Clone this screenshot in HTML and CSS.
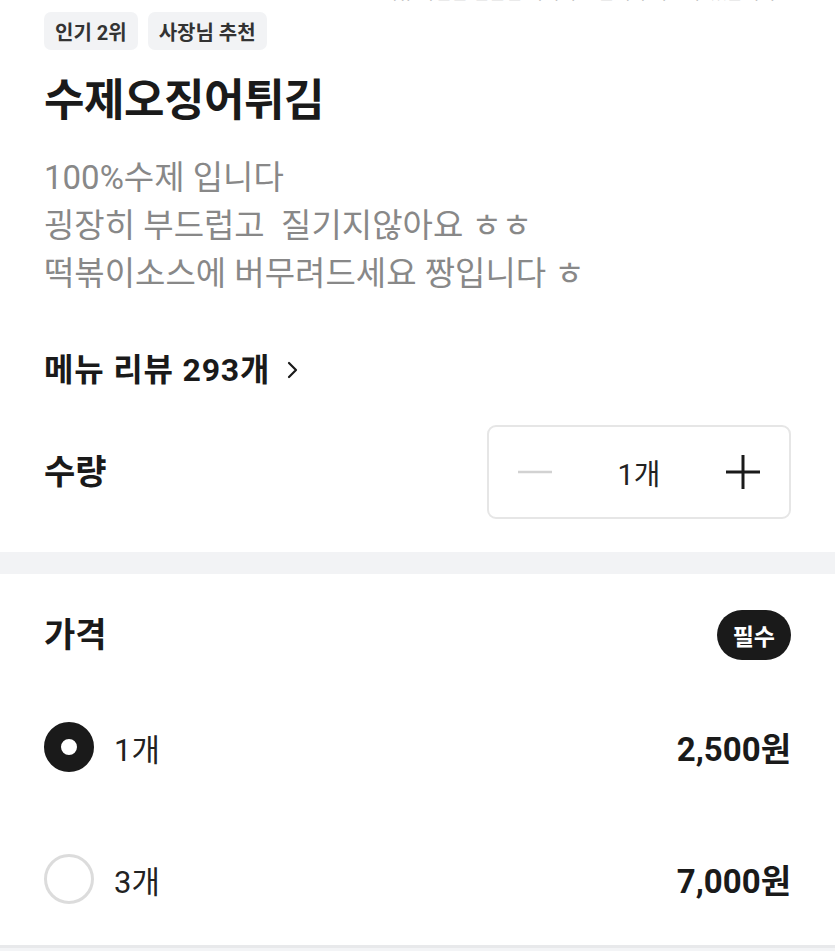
FILE: index.html
```html
<!DOCTYPE html>
<html>
<head>
  <title>수제오징어튀김</title>
  <link rel="stylesheet" href="styles.css">
</head>
<body>
  <div class="notice">
    <p>메뉴 사진은 연출된 이미지로 실제와 다를 수 있습니다.</p>
  </div>

  <section class="menu-info">
    <div class="tags">
      <span class="tag">인기 2위</span>
      <span class="tag">사장님 추천</span>
    </div>
    <h1 class="menu-title">수제오징어튀김</h1>
    <p class="menu-desc">100%수제 입니다<br>굉장히 부드럽고&nbsp; 질기지않아요 ㅎㅎ<br>떡볶이소스에 버무려드세요 짱입니다 ㅎ</p>

    <a class="review-link" href="#">
      메뉴 리뷰 293개
      <svg class="chevron" width="12" height="20" viewBox="0 0 12 20">
        <polyline points="2,3 9,10 2,17" fill="none" stroke="#1a1a1a" stroke-width="2.2" stroke-linecap="round" stroke-linejoin="round"/>
      </svg>
    </a>

    <div class="qty-row">
      <h2 class="row-title">수량</h2>
      <div class="stepper">
        <button class="step-btn" aria-label="빼기">
          <svg width="34" height="34" viewBox="0 0 34 34">
            <line x1="0" y1="17" x2="34" y2="17" stroke="#d2d2d2" stroke-width="2.6"/>
          </svg>
        </button>
        <span class="qty-value">1개</span>
        <button class="step-btn" aria-label="더하기">
          <svg width="34" height="34" viewBox="0 0 34 34">
            <line x1="0" y1="17" x2="34" y2="17" stroke="#1a1a1a" stroke-width="3"/>
            <line x1="17" y1="0" x2="17" y2="34" stroke="#1a1a1a" stroke-width="3"/>
          </svg>
        </button>
      </div>
    </div>
  </section>

  <div class="divider"></div>

  <section class="option-group">
    <div class="group-head">
      <h2 class="row-title">가격</h2>
      <span class="badge">필수</span>
    </div>

    <label class="option">
      <span class="radio checked"></span>
      <span class="option-name">1개</span>
      <span class="option-price">2,500원</span>
    </label>
    <label class="option">
      <span class="radio"></span>
      <span class="option-name">3개</span>
      <span class="option-price">7,000원</span>
    </label>
  </section>

  <div class="bottom-bar"></div>
</body>
</html>
```

FILE: styles.css
```css
body {
  margin: 0;
  background-color: #fff;
  color: #1a1a1a;
  font-family: Roboto, "Noto Sans CJK KR", sans-serif;
  overflow: hidden;
}

.notice {
  height: 6px;
  overflow: hidden;
  padding: 0 54px 0 44px;
}

.notice p {
  margin: -20px 0 0;
  text-align: right;
  font-size: 18px;
  line-height: 26px;
  color: #b5b5b5;
  white-space: nowrap;
}

.menu-info {
  padding: 0 44px 33px;
}

.tags {
  display: flex;
  gap: 10px;
  margin-top: 6px;
}

.tag {
  display: flex;
  align-items: center;
  height: 38px;
  padding: 0 11px;
  border-radius: 7px;
  background-color: #f2f3f5;
  color: #333;
  font-size: 20px;
  font-weight: 700;
}

.menu-title {
  margin: 22px 0 0;
  font-size: 44px;
  line-height: 59px;
  font-weight: 700;
  letter-spacing: -0.5px;
}

.menu-desc {
  margin: 23px 0 0;
  font-size: 33px;
  line-height: 48px;
  color: #888;
}

.review-link {
  display: flex;
  align-items: center;
  gap: 17px;
  margin-top: 52px;
  font-size: 32px;
  line-height: 40px;
  font-weight: 700;
  color: #1a1a1a;
  text-decoration: none;
  letter-spacing: 0.8px;
}

.qty-row {
  display: flex;
  justify-content: space-between;
  align-items: center;
  margin-top: 35px;
}

.row-title {
  margin: 0;
  font-size: 34px;
  line-height: 44px;
  font-weight: 700;
}

.stepper {
  display: flex;
  justify-content: space-between;
  align-items: center;
  box-sizing: border-box;
  width: 304px;
  height: 94px;
  padding: 0 29px;
  border: 2px solid #e6e6e6;
  border-radius: 9px;
}

.step-btn {
  display: flex;
  padding: 0;
  border: none;
  background: none;
}

.qty-value {
  font-size: 29px;
  color: #222;
}

.divider {
  height: 22px;
  background-color: #f2f3f5;
}

.option-group {
  padding: 36px 44px 0;
}

.group-head {
  display: flex;
  justify-content: space-between;
  align-items: center;
  height: 50px;
  margin-bottom: 21px;
}

.badge {
  display: flex;
  align-items: center;
  height: 50px;
  padding: 0 16px;
  border-radius: 25px;
  background-color: #1a1a1a;
  color: #fff;
  font-size: 23px;
  font-weight: 700;
}

.option {
  display: flex;
  align-items: center;
  height: 132px;
}

.radio {
  box-sizing: border-box;
  width: 50px;
  height: 50px;
  border-radius: 50%;
  border: 3px solid #dcdcdc;
  background-color: #fff;
}

.radio.checked {
  border: 17px solid #1a1a1a;
}

.option-name {
  margin-left: 20px;
  font-size: 31px;
  color: #222;
}

.option-price {
  margin-left: auto;
  font-size: 33px;
  font-weight: 700;
}

.bottom-bar {
  height: 20px;
  border-top: 3px solid #e8e9eb;
  background-color: #f3f4f6;
}
```
